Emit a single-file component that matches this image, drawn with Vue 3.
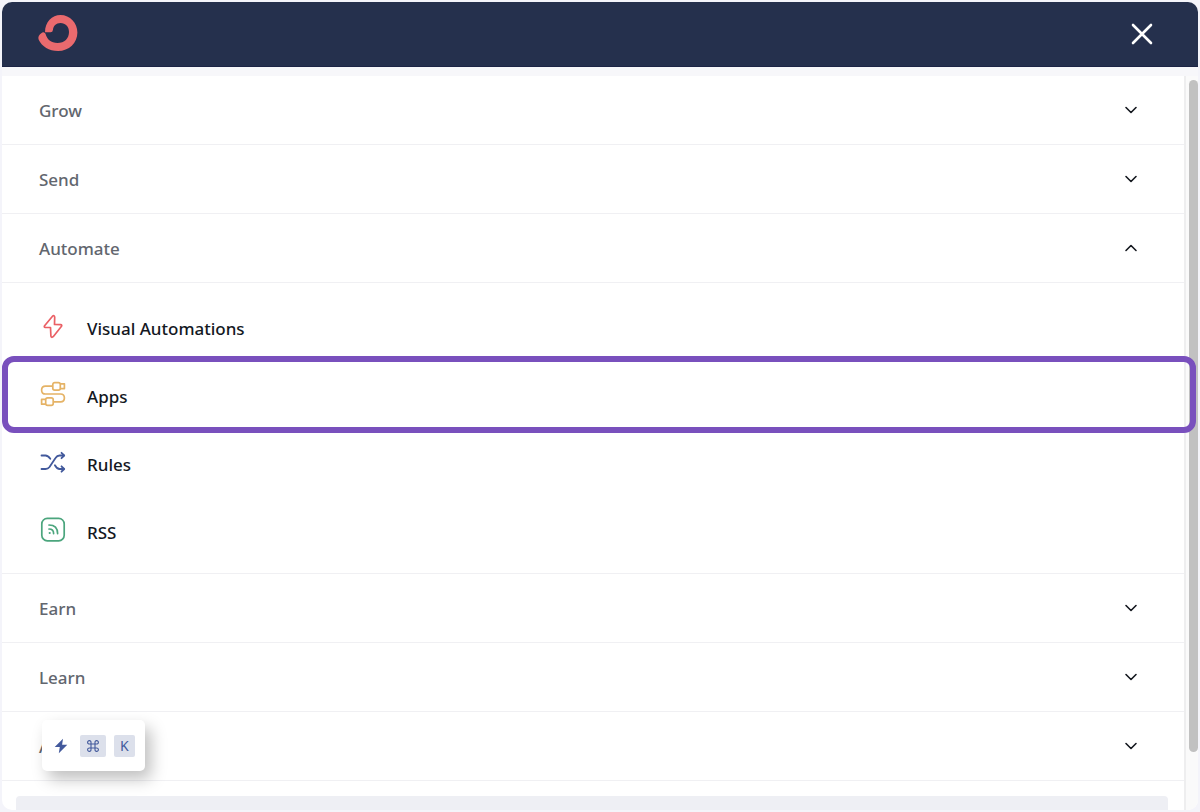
<script setup>
import { ref } from 'vue'

const open = ref('Automate')
const sections = ['Grow', 'Send', 'Automate', 'Earn', 'Learn', 'A']
const items = [
  { name: 'Visual Automations', icon: 'bolt' },
  { name: 'Apps', icon: 'cables', highlighted: true },
  { name: 'Rules', icon: 'shuffle' },
  { name: 'RSS', icon: 'rss' }
]

function toggle(name) {
  open.value = open.value === name ? '' : name
}
</script>

<template>
  <div class="window">
    <header class="topbar">
      <a class="logo" href="#" aria-label="Home">
        <svg width="40" height="38" viewBox="0 0 40 38" fill="#ea6a6e">
          <path d="M7 17.300C7 7 14 0 22.500 0C32 0 39.400 8 39.400 17.500C39.400 28 31 36 20 36C11 36 4 31.500 .8 25Q-.5 21.500 2 19.200L4.300 17.400Q6.500 16.500 7.500 18.800C9 24.500 13 28 19.500 28C26.500 28 31 23.500 31 17C31 11.500 27.500 8 22.500 8C18 8 15.200 11 15 14.800Q14.700 17.300 12.500 17.300Z" />
        </svg>
      </a>
      <button class="close" type="button" aria-label="Close">
        <svg width="22" height="22" viewBox="0 0 22 22" fill="none" stroke="#fff" stroke-width="2.600" stroke-linecap="round">
          <path d="M2 2L20 20M20 2L2 20" />
        </svg>
      </button>
    </header>

    <div class="body">
      <nav class="menu">
        <section v-for="section in sections" :key="section" class="section">
          <button class="row" type="button" :aria-expanded="open === section" @click="toggle(section)">
            <span>{{ section }}</span>
            <svg class="chevron" :class="{ up: open === section }" width="14" height="8" viewBox="0 0 14 8" fill="none" stroke="#14181f" stroke-width="1.600" stroke-linecap="round" stroke-linejoin="round">
              <path d="M2 1.500L7 6.500L12 1.500" />
            </svg>
          </button>
          <ul v-if="section === 'Automate' && open === section" class="items">
            <li v-for="item in items" :key="item.name" class="item" :class="{ highlighted: item.highlighted }">
              <a class="link" href="#">
                <svg v-if="item.icon === 'bolt'" class="icon" viewBox="0 0 28 28" fill="none" stroke="#ea6065" stroke-width="1.700" stroke-linejoin="round">
                  <path d="M13.500 4.200L5.600 13.700Q4.700 15.200 6.300 15.400L11.500 15.500L11.900 24Q12.400 26.200 14.200 24.700L22.500 14.300Q23.300 12.900 21.600 12.700L15.500 12.500L15.700 5.100Q15.300 2.800 13.500 4.200Z" />
                </svg>
                <svg v-else-if="item.icon === 'cables'" class="icon" viewBox="0 0 28 28" fill="none" stroke="#e5b366" stroke-width="1.700" stroke-linejoin="round">
                  <path d="M13.800 6.200H6.500Q2.600 6.200 2.600 10.100T6.500 14H21.500Q25.400 14 25.400 17.900T21.500 21.800H14.200" />
                  <rect x="13.800" y="2.600" width="7.500" height="7.500" rx="1.900" />
                  <path d="M21.300 3.800H25.400V8.600H21.300M6.700 19.400H2.600V24.200H6.700" />
                  <rect x="6.700" y="17.900" width="7.500" height="7.500" rx="1.900" />
                </svg>
                <svg v-else-if="item.icon === 'shuffle'" class="icon" viewBox="0 0 28 28" fill="none" stroke="#42599c" stroke-width="1.800" stroke-linecap="round" stroke-linejoin="round">
                  <path d="M2.500 21H6.500Q9 21 10.500 18.900L16.500 10Q18.100 7.500 20.600 7.500H24.800" />
                  <path d="M2.500 7.500H6.500Q9 7.500 11.300 10.800M15.900 17.200Q18 21 20.600 21H24.800" />
                  <path d="M22.500 4.800L25.200 7.500L22.500 10.200M22.500 18.300L25.200 21L22.500 23.700" />
                </svg>
                <svg v-else class="icon" viewBox="0 0 28 28" fill="none" stroke="#4ba57d" stroke-width="1.700" stroke-linecap="round">
                  <rect x="2.800" y="2.400" width="22.400" height="22.400" rx="5.500" />
                  <path d="M10 9Q18.600 9 18.600 17.600M10 13Q14.600 13 14.600 17.600" />
                  <circle cx="10.700" cy="17" r="1.100" fill="#4ba57d" stroke="none" />
                </svg>
                <span>{{ item.name }}</span>
              </a>
            </li>
          </ul>
        </section>
        <div class="panel"></div>
      </nav>
      <div class="track"><div class="thumb"></div></div>
    </div>

    <button class="shortcut" type="button">
      <svg class="flash" width="14" height="16" viewBox="0 0 14 16" fill="#42599c">
        <path d="M9 .7L.7 9H5.800L4.800 15.300L13.300 6.800H8.100Z" />
      </svg>
      <kbd>
        <svg width="12" height="12" viewBox="0 0 12 12" fill="none" stroke="#42599c" stroke-width="1.100" role="img" aria-label="Command">
          <path d="M4 4H8V8H4ZM4 4H2.500A1.700 1.700 0 1 1 4 2.500ZM8 4V2.500A1.700 1.700 0 1 1 9.500 4ZM8 8H9.500A1.700 1.700 0 1 1 8 9.500ZM4 8V9.500A1.700 1.700 0 1 1 2.500 8Z" />
        </svg>
      </kbd>
      <kbd>K</kbd>
    </button>
  </div>
</template>

<style>
body {
  background: #f4f4fa;
}
</style>

<style scoped>
* {
  box-sizing: border-box;
}
.window {
  position: relative;
  display: flex;
  flex-direction: column;
  height: calc(100vh - 4px);
  margin: 2px;
  overflow: hidden;
  border-radius: 10px;
  background: #fff;
  font-family: "Noto Sans", "Open Sans", sans-serif;
  font-size: 17px;
  font-weight: 500;
}
button {
  border: 0;
  background: none;
  font: inherit;
  cursor: pointer;
}
.topbar {
  display: flex;
  flex: none;
  align-items: center;
  justify-content: space-between;
  height: 65px;
  padding: 0 45px 0 36px;
  border-bottom: 1px solid #1c2445;
  background: #25304d;
}
.logo,
.close {
  display: flex;
  padding: 0;
}
.body {
  display: flex;
  flex: 1;
  min-height: 0;
  border-top: 9px solid #f7f7fa;
}
.menu {
  flex: 1;
  min-width: 0;
}
.section {
  border-bottom: 1px solid #f0f0f3;
}
.row {
  display: flex;
  align-items: center;
  justify-content: space-between;
  width: 100%;
  height: 68px;
  padding: 0 46px 0 37px;
  color: #62666e;
}
.chevron.up {
  transform: rotate(180deg);
}
.items {
  margin: 0;
  padding: 11px 0 7px;
  border-top: 1px solid #f0f0f3;
  list-style: none;
}
.item {
  position: relative;
}
.link {
  display: flex;
  align-items: center;
  gap: 20px;
  height: 68px;
  padding-left: 37px;
  color: #14181f;
  text-decoration: none;
}
.icon {
  width: 28px;
  height: 28px;
  margin-bottom: 4px;
}
.highlighted::after {
  position: absolute;
  z-index: 1;
  inset: -6px -12px -3px 0;
  border: 6px solid #7950bd;
  border-radius: 12px;
  content: "";
  pointer-events: none;
}
.panel {
  height: 40px;
  margin: 15px 16px 0 14px;
  border-radius: 4px;
  background: #eeeff4;
}
.track {
  display: flex;
  width: 14px;
  padding: 4px 0 0 3px;
  border-left: 2px solid #eeeeef;
  background: #fafafa;
}
.thumb {
  width: 100%;
  height: 92%;
  border-radius: 5px;
  background: #c1c1c1;
}
.shortcut {
  position: absolute;
  bottom: 39px;
  left: 40px;
  display: flex;
  align-items: center;
  gap: 8px;
  height: 51px;
  padding: 0 10px 0 12px;
  border-radius: 5px;
  background: #fff;
  box-shadow: 6px 8px 16px rgba(0, 0, 0, 0.25);
}
.flash {
  margin-right: 4px;
}
kbd {
  display: flex;
  align-items: center;
  justify-content: center;
  height: 22px;
  padding: 0 7px;
  border-radius: 2px;
  background: #dce0eb;
  color: #42599c;
  font-family: "Noto Sans", sans-serif;
  font-size: 14px;
  font-weight: 400;
}
kbd:last-child {
  padding: 0 6px;
}
</style>
